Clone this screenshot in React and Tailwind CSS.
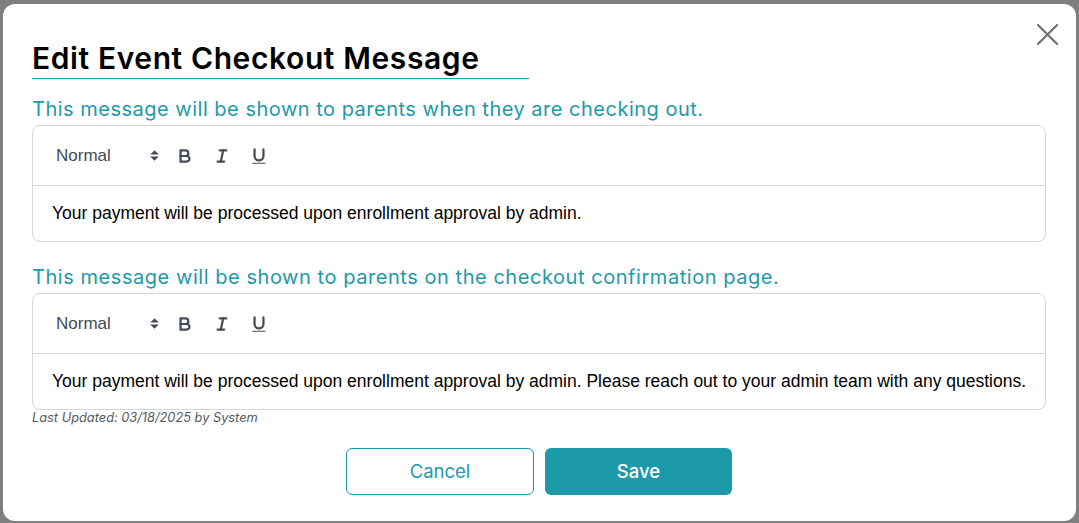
import { useState } from 'react';

const TEAL = '#1d9aa9';

function PickerArrows() {
    return (
        <svg width="11" height="15" viewBox="0 0 10 14" className="ml-auto mr-[2px]">
            <polygon points="1,6 5,2 9,6" fill="#444b55" />
            <polygon points="1,8 5,12 9,8" fill="#444b55" />
        </svg>
    );
}

function BoldIcon() {
    return (
        <svg width="20" height="20" viewBox="0 0 18 18" fill="none" stroke="#444b55" strokeWidth="2">
            <path d="M5,4H9.5A2.5,2.5,0,0,1,12,6.5v0A2.5,2.5,0,0,1,9.5,9H5V4Z" />
            <path d="M5,9h5.5A2.5,2.5,0,0,1,13,11.5v0A2.5,2.5,0,0,1,10.5,14H5V9Z" />
        </svg>
    );
}

function ItalicIcon() {
    return (
        <svg width="20" height="20" viewBox="0 0 18 18" fill="none" stroke="#444b55" strokeWidth="2" strokeLinecap="round">
            <line x1="7" x2="13" y1="4" y2="4" />
            <line x1="5" x2="11" y1="14" y2="14" />
            <line x1="8" x2="10" y1="14" y2="4" />
        </svg>
    );
}

function UnderlineIcon() {
    return (
        <svg width="20" height="20" viewBox="0 0 18 18" fill="none">
            <path d="M5,3V9a4,4,0,0,0,4,4H9a4,4,0,0,0,4-4V3" stroke="#444b55" strokeWidth="2" strokeLinecap="round" />
            <rect x="3" y="15" width="12" height="1" rx="0.5" fill="#444b55" />
        </svg>
    );
}

function Editor({ value }) {
    return (
        <div className="border border-[#d4d7dc] rounded-lg">
            <div className="h-[60px] border-b border-[#d4d7dc] flex items-center pl-[23px]">
                <div className="w-[106px] flex items-center text-[17px] text-[#444b55]" style={{ fontFamily: '"Liberation Sans", Arial, sans-serif' }}>
                    <span>Normal</span>
                    <PickerArrows />
                </div>
                <button className="w-[28px] h-[24px] flex items-center justify-center ml-[9px]"><BoldIcon /></button>
                <button className="w-[28px] h-[24px] flex items-center justify-center ml-[9px]"><ItalicIcon /></button>
                <button className="w-[28px] h-[24px] flex items-center justify-center ml-[9px]"><UnderlineIcon /></button>
            </div>
            <div className="h-[55px] flex items-center pl-[19px] text-[17.5px] text-black" style={{ fontFamily: '"Liberation Sans", Arial, sans-serif' }}>
                {value}
            </div>
        </div>
    );
}

export default function App() {
    const [first] = useState('Your payment will be processed upon enrollment approval by admin.');
    const [second] = useState('Your payment will be processed upon enrollment approval by admin. Please reach out to your admin team with any questions.');

    return (
        <div className="h-[523px] w-[1079px] bg-[#7f7f7f] overflow-hidden pt-[4px] pl-[3px]" style={{ fontFamily: 'Inter, "Open Sans", sans-serif' }}>
            <div className="relative w-[1073px] h-[517px] bg-white rounded-xl pl-[29px] pr-[30px]">
                <button className="absolute right-[13px] top-[14px] w-[32px] h-[32px] flex items-center justify-center">
                    <svg width="23" height="23" viewBox="0 0 24 24" stroke="#6f6f6f" strokeWidth="2.3" strokeLinecap="round">
                        <line x1="2" y1="2" x2="22" y2="22" />
                        <line x1="22" y1="2" x2="2" y2="22" />
                    </svg>
                </button>

                <div className="pt-[36px]">
                    <h2 className="w-[497px] border-b border-[#1d9aa9] pb-[2px] text-[30px] leading-[36px] font-semibold text-black tracking-[0.6px]">
                        Edit Event Checkout Message
                    </h2>
                </div>

                <p className="mt-[16px] text-[20px] leading-[28px] tracking-[0.5px]" style={{ color: TEAL }}>
                    This message will be shown to parents when they are checking out.
                </p>
                <div className="mt-[2px]">
                    <Editor value={first} />
                </div>

                <p className="mt-[21px] text-[20px] leading-[28px] tracking-[0.55px]" style={{ color: TEAL }}>
                    This message will be shown to parents on the checkout confirmation page.
                </p>
                <div className="mt-[2px]">
                    <Editor value={second} />
                </div>

                <p className="text-[12.8px] leading-[16px] italic text-[#555a61]">
                    Last Updated: 03/18/2025 by System
                </p>

                <div className="flex justify-center gap-[11px] mt-[22px]">
                    <button className="w-[188px] h-[47px] rounded-md border border-[#1d9aa9] bg-white text-[18.5px] text-[#1d9aa9]">
                        Cancel
                    </button>
                    <button className="w-[187px] h-[47px] rounded-md bg-[#1d9aa9] text-[18.5px] font-medium text-white">
                        Save
                    </button>
                </div>
            </div>
        </div>
    );
}
